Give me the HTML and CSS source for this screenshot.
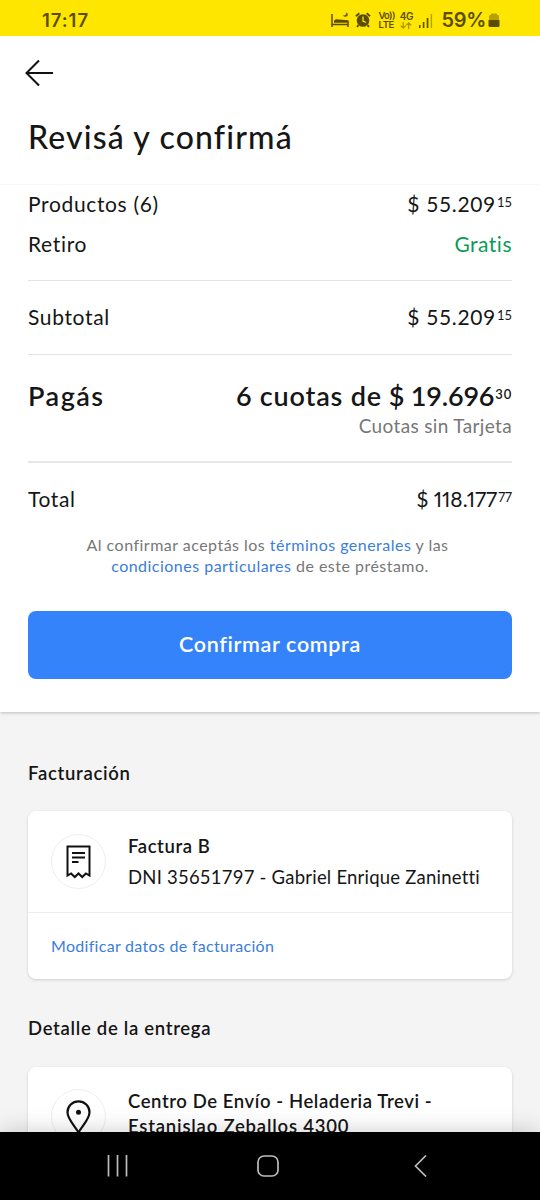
FILE: index.html
```
<!DOCTYPE html>
<html lang="es">
<head>
<meta charset="utf-8">
<meta name="viewport" content="width=device-width, initial-scale=1">
<title>Revisá y confirmá</title>
<link rel="stylesheet" href="styles.css">
</head>
<body>
<div class="phone">
  <div class="status">
    <span class="status-time">17:17</span>
    <div class="status-icons">
      <svg class="ic-bed" width="19" height="18" viewBox="0 0 19 18" fill="none" stroke="#5b4d00" stroke-width="1.5"><path d="M1 3v13M1 13.500h16M17 10.500v5.500"/><path d="M3 11.700h14.500V9.300L5 8.300l-2 1.200z" fill="#5b4d00" stroke="none"/><path d="M12.500 4.700c2 .5 3.200-.8 2.900-2.900 2.500 2 .2 5-2.900 2.900z" fill="#5b4d00" stroke-width=".6"/></svg>
      <svg class="ic-alarm" width="16" height="16" viewBox="0 0 16 16"><circle cx="8" cy="8.500" r="6.300" fill="#5b4d00"/><path d="M1 4.300L4.300 1.300M15 4.300L11.700 1.300M3.500 13.200l-1.500 1.700M12.500 13.200l1.500 1.700" stroke="#5b4d00" stroke-width="2"/><path d="M8 4.500V9l3 1.500" fill="none" stroke="#ffe600" stroke-width="1.300"/></svg>
      <div class="volte"><span class="vo">Vo))</span><span>LTE</span></div>
      <div class="net"><span>4G</span>
        <svg width="12" height="7" viewBox="0 0 12 7" fill="none" stroke="#a79400" stroke-width="1.200"><path d="M3.200 0v6M.7 3.700l2.500 2.500 2.500-2.500M8.700 7V1M6.200 3.300L8.700.8l2.500 2.500"/></svg>
      </div>
      <svg class="ic-signal" width="14" height="15" viewBox="0 0 14 15"><path fill="#5b4d00" d="M0 12h1.500v3H0zM3.800 9h1.600v6H3.800zM7.700 5h1.700v10H7.700z"/><path fill="#b5a100" d="M11.700 1h1.400v14h-1.400z"/></svg>
      <span class="status-pct">59%</span>
      <svg class="ic-batt" width="12" height="15" viewBox="0 0 12 15"><path fill="#b5a100" d="M1 7V3.300Q1 2 2.300 2H3V.5h6V2h.7Q11 2 11 3.300V7z"/><path fill="#5b4d00" d="M.5 7h11v5.500q0 1.500-1.500 1.500H2Q.5 14 .5 12.500z"/></svg>
    </div>
  </div>

  <header class="header">
    <svg class="back" width="30" height="28" viewBox="0 0 30 28" fill="none" stroke="#111" stroke-width="2"><path d="M29 14H2.500M15 1.500L2.500 14 15 26.500"/></svg>
    <h1>Revisá y confirmá</h1>
  </header>

  <main>
    <section class="summary">
      <div class="row products"><span>Productos (6)</span><span class="price">$ 55.209<sup>15</sup></span></div>
      <div class="row pickup"><span>Retiro</span><span class="free">Gratis</span></div>
      <div class="row subtotal"><span>Subtotal</span><span class="price">$ 55.209<sup>15</sup></span></div>
      <div class="pay">
        <div class="row pay-main"><span class="pay-label">Pagás</span><span class="pay-value"><span class="pay-count">6 cuotas de</span><span class="price">$ 19.696<sup>30</sup></span></span></div>
        <div class="pay-note">Cuotas sin Tarjeta</div>
      </div>
      <div class="row total"><span>Total</span><span class="price narrow">$ 118.177<sup>77</sup></span></div>
      <p class="legal"><span>Al confirmar aceptás los <a>términos generales</a> y las</span><span class="legal-end"><a>condiciones particulares</a> de este préstamo.</span></p>
      <button class="confirm">Confirmar compra</button>
    </section>

    <h2 class="h-billing">Facturación</h2>
    <section class="card">
      <div class="card-body">
        <div class="disc"><svg width="25" height="34" viewBox="0 0 25 34" fill="none" stroke="#111" stroke-width="2"><path d="M1.500 1.500h22v29l-3.600-2-3.700 3.500-3.700-3.500L8.800 32l-3.700-3.500-3.600 2z"/><path d="M6 8h13M6 12.500h13M6 17h6.500"/></svg></div>
        <div class="card-text"><strong>Factura B</strong><span class="dni">DNI 35651797 - Gabriel Enrique Zaninetti</span></div>
      </div>
      <a class="card-link">Modificar datos de facturación</a>
    </section>

    <h2 class="h-delivery">Detalle de la entrega</h2>
    <section class="card delivery">
      <div class="card-body">
        <div class="disc"><svg width="25" height="34" viewBox="0 0 25 34" fill="none" stroke="#111" stroke-width="2.200"><path d="M12.500 32.500C9.500 26.500 1.500 19.500 1.500 12.200a11 10.800 0 0 1 22 0c0 7.300-8 14.300-11 20.300z"/><circle cx="12.500" cy="12.300" r="2.500" fill="#111" stroke="none"/></svg></div>
        <div class="card-text"><strong>Centro De Envío - Heladeria Trevi -</strong><strong class="addr">Estanislao Zeballos 4300</strong></div>
      </div>
    </section>
  </main>

  <nav class="nav">
    <svg width="22" height="22" viewBox="0 0 22 22" stroke="#bcbcbc" stroke-width="1.700"><path d="M1.500 0v21.500M10.500 0v21.500M19.500 0v21.500"/></svg>
    <svg width="22" height="22" viewBox="0 0 22 22" fill="none" stroke="#bcbcbc" stroke-width="1.700"><rect x="1" y="1" width="20" height="20" rx="6"/></svg>
    <svg width="13" height="22" viewBox="0 0 13 22" fill="none" stroke="#bcbcbc" stroke-width="1.700"><path d="M12 .5L1.500 11 12 21.500"/></svg>
  </nav>
</div>
</body>
</html>
```
FILE: styles.css
```
* { box-sizing: border-box; }

body {
  margin: 0;
  background: #f4f4f4;
  color: #161616;
  font-family: Lato, "Open Sans", sans-serif;
}

.phone {
  width: 540px;
  height: 1200px;
  display: flex;
  flex-direction: column;
  overflow: hidden;
}

/* Status bar */
.status {
  flex: none;
  height: 36px;
  padding: 4px 40px 0 42px;
  display: flex;
  align-items: center;
  justify-content: space-between;
  background: #ffe600;
  color: #5b4d00;
  font-family: Inter, sans-serif;
  font-weight: 600;
  line-height: 1;
}
.status-time { font-size: 18.5px; letter-spacing: 0.95px; }
.status-icons { display: flex; align-items: center; }
.ic-alarm { margin-left: 5px; }
.volte { margin-left: 7px; width: 17px; font-size: 9.5px; line-height: 9px; letter-spacing: -0.3px; display: grid; }
.vo { letter-spacing: -0.7px; }
.net { margin-left: 4px; width: 14px; font-size: 10px; line-height: 9px; display: grid; justify-items: center; row-gap: 1px; letter-spacing: -0.3px; }
.ic-signal { margin-left: 6px; }
.status-pct { margin-left: 8px; font-size: 20px; letter-spacing: -0.3px; }
.ic-batt { margin-left: 2px; }

/* Title area */
.header {
  flex: none;
  height: 149px;
  padding: 23px 28px 0 24px;
  background: #fff;
  border-bottom: 1px solid #f7f7f7;
}
.back { display: block; }
h1 {
  margin: 30px 0 0 4px;
  font-size: 32px;
  line-height: 40px;
  font-weight: 500;
  letter-spacing: 1.15px;
}

main {
  flex: 1;
  min-height: 0;
  overflow: hidden;
}

/* Order summary */
.summary {
  height: 527px;
  padding: 0 28px;
  background: #fff;
  box-shadow: 0 1px 3px rgba(0, 0, 0, 0.22);
}
.row {
  display: flex;
  justify-content: space-between;
  align-items: center;
  font-size: 21px;
  letter-spacing: 0.65px;
}
.products { height: 38px; padding-bottom: 2px; }
.pickup { height: 57px; padding-bottom: 17px; }
.subtotal { height: 75px; padding-bottom: 2px; border-top: 1px solid #e3e3e3; border-bottom: 1px solid #e3e3e3; }
.price { display: flex; align-items: center; }
sup {
  margin-left: 1px;
  padding-bottom: 3px;
  font-size: 13px;
  letter-spacing: 0;
}
.free { color: #0b9b57; letter-spacing: 0.5px; }
.narrow { font-variant-numeric: proportional-nums; letter-spacing: 0; }
.pay { height: 108px; padding-top: 23px; border-bottom: 2px solid #e6e6e6; }
.pay-main { height: 34px; font-size: 27px; font-weight: 600; }
.pay-label { letter-spacing: 1.5px; }
.pay-value { display: flex; align-items: center; gap: 7px; }
.pay-count { letter-spacing: 0.8px; }
.pay-main .price { letter-spacing: -0.2px; }
.pay-main sup { font-size: 13px; letter-spacing: 0.8px; }
.pay-note {
  text-align: right;
  font-size: 19px;
  line-height: 27px;
  letter-spacing: 0.35px;
  color: #777;
}
.total { height: 71px; }
.legal {
  margin: 0 5px 0 0;
  display: grid;
  text-align: center;
  font-size: 16px;
  line-height: 21px;
  letter-spacing: 0.48px;
  color: #777;
}
.legal-end { padding-left: 5px; }
a { color: #3b7ddb; }
.confirm {
  display: block;
  width: 484px;
  height: 68px;
  margin-top: 35px;
  padding: 0 0 3px;
  border: 0;
  border-radius: 8px;
  background: #3483fa;
  color: #fff;
  font: 600 21.5px Lato, sans-serif;
  letter-spacing: 0.65px;
}

/* Cards */
h2 {
  margin: 0 28px;
  font-size: 18.5px;
  line-height: 24px;
  font-weight: 600;
  letter-spacing: 0.7px;
}
.h-billing { margin-top: 49px; margin-bottom: 26px; }
.h-delivery { margin-top: 37px; margin-bottom: 27px; }
.card {
  margin: 0 28px;
  border-radius: 8px;
  background: #fff;
  box-shadow: 0 1px 3px rgba(0, 0, 0, 0.16);
}
.card-body {
  height: 102px;
  padding: 23px 22px 0 23px;
  display: flex;
  gap: 22px;
  border-bottom: 1px solid #eee;
}
.disc {
  flex: none;
  width: 55px;
  height: 55px;
  display: grid;
  place-items: center;
  border: 1px solid #eee;
  border-radius: 50%;
}
.card-text { display: flex; flex-direction: column; font-size: 18.5px; line-height: 25px; white-space: nowrap; }
.card-text strong { font-weight: 600; letter-spacing: 0.58px; }
.card-text .addr { letter-spacing: 0.8px; }
.dni { margin-top: 6px; letter-spacing: 0.22px; }
.card-link { display: block; height: 66px; padding-left: 23px; font-size: 16px; line-height: 66px; letter-spacing: 0.3px; }
.delivery { height: 120px; }
.delivery .card-body { padding-top: 22px; }

/* Android navigation */
.nav {
  flex: none;
  height: 68px;
  padding: 0 113px 0 107px;
  display: grid;
  grid-template-columns: 150px 157px 13px;
  align-items: center;
  background: #000;
  box-shadow: 0 0 24px rgba(0, 0, 0, 0.2);
  z-index: 1;
}
```
